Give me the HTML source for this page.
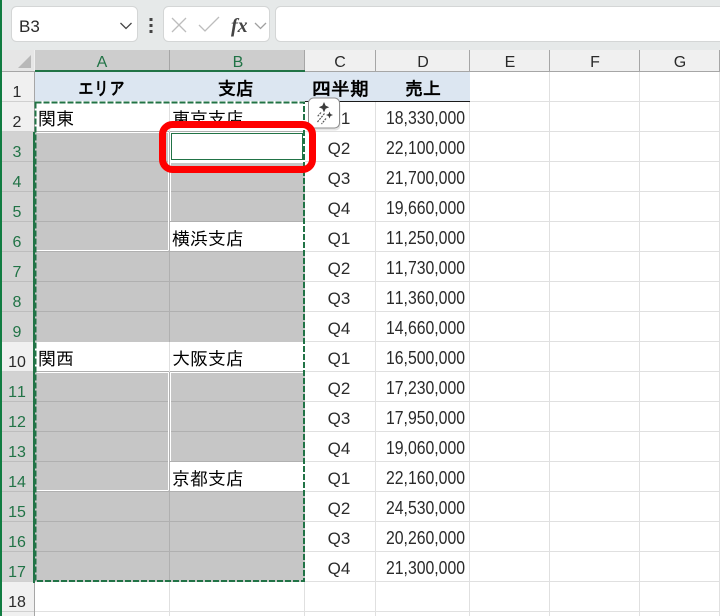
<!DOCTYPE html>
<html><head><meta charset="utf-8">
<style>
html,body{margin:0;padding:0;background:#fff;overflow:hidden}
svg{display:block;position:absolute;left:0;top:0}
text{font-family:"Liberation Sans",sans-serif;font-size:16px;fill:#2a2a2a;font-kerning:none}
.j{font-family:"IPAGothic","Noto Sans CJK JP",sans-serif;font-size:18px;fill:#000}
.b{font-weight:bold}
.m{text-anchor:middle}
.e{font-size:18px}
.q{font-size:17px}
.g{fill:#217346}
</style></head>
<body>
<svg width="720" height="616" viewBox="0 0 720 616" xmlns="http://www.w3.org/2000/svg">
<!-- toolbar -->
<rect width="720" height="50" fill="#e6e9e9"/>
<rect x="275.500" y="6.500" width="460" height="35" rx="5" fill="#fff" stroke="#d4d6d6"/>
<rect x="11.500" y="6.500" width="126" height="35" rx="5" fill="#fff" stroke="#d4d6d6"/>
<rect x="163.500" y="6.500" width="106" height="35" rx="5" fill="#fff" stroke="#d4d6d6"/>
<text x="19" y="32" style="font-size:17px">B3</text>
<path d="M120.500 23l5.500 5.500 5.500-5.500" fill="none" stroke="#444" stroke-width="1.300"/>
<rect x="149.500" y="18" width="3" height="3" fill="#444"/><rect x="149.500" y="24" width="3" height="3" fill="#444"/><rect x="149.500" y="30" width="3" height="3" fill="#444"/>
<path d="M172 18l14 14M186 18l-14 14" stroke="#bdbdbd" stroke-width="1.300" fill="none"/>
<path d="M199 25l6 6 14-14" stroke="#bdbdbd" stroke-width="1.300" fill="none"/>
<text x="231" y="32" style="font-family:'Liberation Serif',serif;font-size:20px;font-style:italic;font-weight:bold;fill:#444">fx</text>
<path d="M255 23l5.500 5.500 5.500-5.500" fill="none" stroke="#a0a0a0" stroke-width="1.300"/>

<!-- column headers -->
<rect x="2" y="50" width="718" height="21" fill="#f0f0f0"/>
<rect x="2" y="50" width="32" height="22" fill="#e6e6e6"/>
<path d="M31 55v13h-13z" fill="#b8b8b8"/>
<rect x="35" y="50" width="270" height="20" fill="#cdcdcd"/>
<rect x="305" y="71" width="415" height="1" fill="#a6a6a6"/>
<rect x="2" y="71" width="33" height="1" fill="#a6a6a6"/>
<rect x="35" y="70" width="270" height="2" fill="#217346"/>
<path d="M169.500 50v20M375.500 50v21M469.500 50v21M549.500 50v21M639.500 50v21M719.500 50v21" stroke="#a6a6a6"/>
<path d="M304.500 50v20" stroke="#a6a6a6"/>
<text class="m g" x="102" y="67">A</text>
<text class="m g" x="238" y="67">B</text>
<text class="m" x="340" y="67">C</text>
<text class="m" x="423" y="67">D</text>
<text class="m" x="510" y="67">E</text>
<text class="m" x="595" y="67">F</text>
<text class="m" x="680" y="67">G</text>

<!-- row headers -->
<rect x="2" y="72" width="32" height="544" fill="#f0f0f0"/>
<rect x="2" y="132" width="32" height="210" fill="#d2d2d2"/>
<rect x="2" y="372" width="32" height="210" fill="#d2d2d2"/>
<path d="M2 101.500h32M2 131.500h32M2 341.500h32M2 371.500h32M2 581.500h32M2 611.500h32" stroke="#d0d0d0"/>
<path d="M2 161.500h32M2 191.500h32M2 221.500h32M2 251.500h32M2 281.500h32M2 311.500h32M2 401.500h32M2 431.500h32M2 461.500h32M2 491.500h32M2 521.500h32M2 551.500h32" stroke="#bdbdbd"/>
<rect x="0" y="0" width="2" height="616" fill="#107c41"/>
<rect x="34" y="72" width="1" height="544" fill="#a6a6a6"/>
<text class="m" x="17" y="97">1</text>
<text class="m" x="17" y="127">2</text>
<text class="m g" x="17" y="157">3</text>
<text class="m g" x="17" y="187">4</text>
<text class="m g" x="17" y="217">5</text>
<text class="m g" x="17" y="247">6</text>
<text class="m g" x="17" y="277">7</text>
<text class="m g" x="17" y="307">8</text>
<text class="m g" x="17" y="337">9</text>
<text class="m" x="17" y="367">10</text>
<text class="m g" x="17" y="397">11</text>
<text class="m g" x="17" y="427">12</text>
<text class="m g" x="17" y="457">13</text>
<text class="m g" x="17" y="487">14</text>
<text class="m g" x="17" y="517">15</text>
<text class="m g" x="17" y="547">16</text>
<text class="m g" x="17" y="577">17</text>
<text class="m" x="17" y="607">18</text>

<!-- sheet gridlines -->
<path d="M305 131.500h415M305 161.500h415M305 191.500h415M305 221.500h415M305 251.500h415M305 281.500h415M305 311.500h415M305 341.500h415M305 371.500h415M305 401.500h415M305 431.500h415M305 461.500h415M305 491.500h415M305 521.500h415M305 551.500h415M305 581.500h415M35 611.500h685M470 101.500h250" stroke="#e0e0e0"/>
<path d="M375.500 102v514M469.500 72v544M549.500 72v544M639.500 72v544M719.500 72v544M169.500 582v34M304.500 582v34" stroke="#e0e0e0"/>

<!-- header cells -->
<rect x="35" y="72" width="435" height="29" fill="#dce6f1"/>
<rect x="305" y="101" width="165" height="1" fill="#1a1a1a"/>

<!-- gray fill -->
<rect x="35" y="132" width="270" height="450" fill="#c6c6c6"/>
<!-- white cells -->
<rect x="35" y="102" width="270" height="30" fill="#fff"/>
<rect x="170" y="222" width="135" height="30" fill="#fff"/>
<rect x="35" y="342" width="270" height="30" fill="#fff"/>
<rect x="170" y="462" width="135" height="30" fill="#fff"/>
<rect x="170" y="132" width="135" height="30" fill="#fff"/>
<!-- gray gridlines -->
<path d="M35 161.500h135M35 191.500h270M35 221.500h135M35 281.500h270M35 311.500h270M35 401.500h270M35 431.500h270M35 461.500h135M35 521.500h270M35 551.500h270" stroke="#b0b0b0"/>
<path d="M35 131.500h270M35 251.500h270M35 371.500h270M35 491.500h270M170 221.500h135M170 461.500h135" stroke="#b0b0b0"/>
<path d="M169.500 132v120M169.500 372v120M169.500 252v90M169.500 492v90" stroke="#b0b0b0"/>
<path d="M169.500 102v30M169.500 342v30" stroke="#e0e0e0"/>
<!-- white inner lines -->
<path d="M168.500 132v118M168.500 372v118M36 250.500h132.500M36 490.500h132.500M170.500 162v59M170.500 372v89" stroke="#fff"/>
<path d="M36 132.500h133M36 372.500h133M171 372.500h133M171 162.500h133" stroke="#fff"/>
<!-- active cell -->
<rect x="171.500" y="133.500" width="131" height="26" fill="#fff" stroke="#217346"/>

<!-- text cells -->
<text class="j" x="38" y="125">関東</text>
<text class="j" x="172" y="125">東京支店</text>
<text class="j" x="172" y="245">横浜支店</text>
<text class="j" x="38" y="365">関西</text>
<text class="j" x="172" y="365">大阪支店</text>
<text class="j" x="172" y="485">京都支店</text>
<text class="j b" x="78" y="95" textLength="47" lengthAdjust="spacingAndGlyphs">エリア</text>
<text class="j b" x="218" y="95">支店</text>
<text class="j b" x="312" y="95" textLength="57" lengthAdjust="spacingAndGlyphs">四半期</text>
<text class="j b" x="405" y="95">売上</text>

<text class="m q" x="339" y="124">Q1</text>
<text class="m q" x="339" y="154">Q2</text>
<text class="m q" x="339" y="184">Q3</text>
<text class="m q" x="339" y="214">Q4</text>
<text class="m q" x="339" y="244">Q1</text>
<text class="m q" x="339" y="274">Q2</text>
<text class="m q" x="339" y="304">Q3</text>
<text class="m q" x="339" y="334">Q4</text>
<text class="m q" x="339" y="364">Q1</text>
<text class="m q" x="339" y="394">Q2</text>
<text class="m q" x="339" y="424">Q3</text>
<text class="m q" x="339" y="454">Q4</text>
<text class="m q" x="339" y="484">Q1</text>
<text class="m q" x="339" y="514">Q2</text>
<text class="m q" x="339" y="544">Q3</text>
<text class="m q" x="339" y="574">Q4</text>

<text class="e" x="386" y="124" textLength="79" lengthAdjust="spacingAndGlyphs">18,330,000</text>
<text class="e" x="386" y="154" textLength="79" lengthAdjust="spacingAndGlyphs">22,100,000</text>
<text class="e" x="386" y="184" textLength="79" lengthAdjust="spacingAndGlyphs">21,700,000</text>
<text class="e" x="386" y="214" textLength="79" lengthAdjust="spacingAndGlyphs">19,660,000</text>
<text class="e" x="386" y="244" textLength="79" lengthAdjust="spacingAndGlyphs">11,250,000</text>
<text class="e" x="386" y="274" textLength="79" lengthAdjust="spacingAndGlyphs">11,730,000</text>
<text class="e" x="386" y="304" textLength="79" lengthAdjust="spacingAndGlyphs">11,360,000</text>
<text class="e" x="386" y="334" textLength="79" lengthAdjust="spacingAndGlyphs">14,660,000</text>
<text class="e" x="386" y="364" textLength="79" lengthAdjust="spacingAndGlyphs">16,500,000</text>
<text class="e" x="386" y="394" textLength="79" lengthAdjust="spacingAndGlyphs">17,230,000</text>
<text class="e" x="386" y="424" textLength="79" lengthAdjust="spacingAndGlyphs">17,950,000</text>
<text class="e" x="386" y="454" textLength="79" lengthAdjust="spacingAndGlyphs">19,060,000</text>
<text class="e" x="386" y="484" textLength="79" lengthAdjust="spacingAndGlyphs">22,160,000</text>
<text class="e" x="386" y="514" textLength="79" lengthAdjust="spacingAndGlyphs">24,530,000</text>
<text class="e" x="386" y="544" textLength="79" lengthAdjust="spacingAndGlyphs">20,260,000</text>
<text class="e" x="386" y="574" textLength="79" lengthAdjust="spacingAndGlyphs">21,300,000</text>

<!-- marching ants -->
<rect x="33" y="132" width="2" height="451" fill="#217346"/>
<rect x="35.500" y="102.500" width="268.500" height="478.500" fill="none" stroke="#217346" stroke-width="2" stroke-dasharray="6 2"/>

<!-- magic button -->
<rect x="308.500" y="98.500" width="31" height="30" rx="5" fill="#000" opacity=".1" transform="translate(1 2)"/>
<rect x="308.500" y="98" width="31" height="30" rx="5" fill="#fff" stroke="#8f8f8f"/>
<path d="M324 102l1.600 3.600 3.600 1.600-3.600 1.600-1.600 3.600-1.600-3.600-3.600-1.600 3.600-1.600zM329.500 111.500l1 2.500 2.500 1-2.500 1-1 2.500-1-2.500-2.500-1 2.500-1z" fill="#3c3c3c"/>
<path d="M321 112.500l-3.500 4M324.500 113.500l-7.500 9M326 118.500l-4.500 5.500" stroke="#555" stroke-width="1.200" stroke-dasharray="2 1" fill="none"/>

<!-- red callout -->
<rect x="162.500" y="124.500" width="150" height="45" rx="10" fill="none" stroke="#ff0000" stroke-width="7"/>
</svg>
</body></html>
